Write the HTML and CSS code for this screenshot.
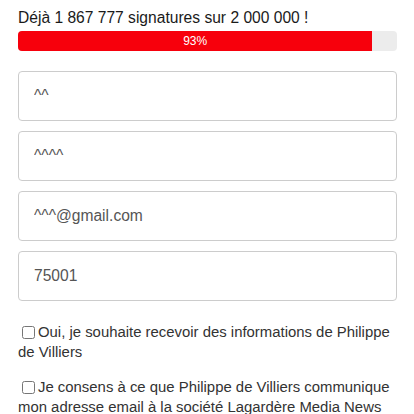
FILE: index.html
```html
<!DOCTYPE html>
<html lang="fr">
<head>
<meta charset="utf-8">
<link rel="stylesheet" href="styles.css">
</head>
<body>
<div class="page">
  <p class="count">Déjà 1 867 777 signatures sur 2 000 000 !</p>
  <div class="progress"><div class="progress-bar" style="width:93.5%">93%</div></div>
  <form class="form">
    <input class="field" type="text" value="^^">
    <input class="field" type="text" value="^^^^">
    <input class="field" type="email" value="^^^@gmail.com">
    <input class="field" type="text" value="75001">
    <label class="check"><input type="checkbox">Oui, je souhaite recevoir des informations de Philippe de Villiers</label>
    <label class="check"><input type="checkbox">Je consens à ce que Philippe de Villiers communique mon adresse email à la société Lagardère Media News</label>
  </form>
</div>
</body>
</html>
```
FILE: styles.css
```css
html, body {
  margin: 0;
  padding: 0;
  background: #fff;
}
body {
  font-family: "Liberation Sans", Arial, sans-serif;
  font-size: 15.6px;
  color: #222;
}
.page {
  padding: 9px 17px 0 18px;
}
.count {
  margin: 0;
  line-height: 18px;
  color: #1a1a1a;
}
.progress {
  margin-top: 4px;
  height: 20px;
  background: #ececec;
  border-radius: 4px;
  overflow: hidden;
}
.progress-bar {
  height: 100%;
  background: #f7000c;
  color: #fff;
  font-size: 12px;
  line-height: 20px;
  text-align: center;
}
.form {
  margin-top: 20px;
  display: flex;
  flex-direction: column;
  gap: 10px;
}
.field {
  box-sizing: border-box;
  width: 100%;
  height: 50px;
  margin: 0;
  padding: 0 15px;
  border: 1px solid #ccc;
  border-radius: 4px;
  font-family: "Liberation Sans", Arial, sans-serif;
  font-size: 15.6px;
  color: #555;
  background: #fff;
  outline: none;
}
.check {
  display: block;
  font-size: 14.9px;
  line-height: 20px;
  color: #333;
  margin-top: 11px;
}
.check + .check {
  margin-top: 5px;
}
.check input {
  width: 13px;
  height: 13px;
  margin: 0 3px 0 4px;
  vertical-align: -2px;
}
```
